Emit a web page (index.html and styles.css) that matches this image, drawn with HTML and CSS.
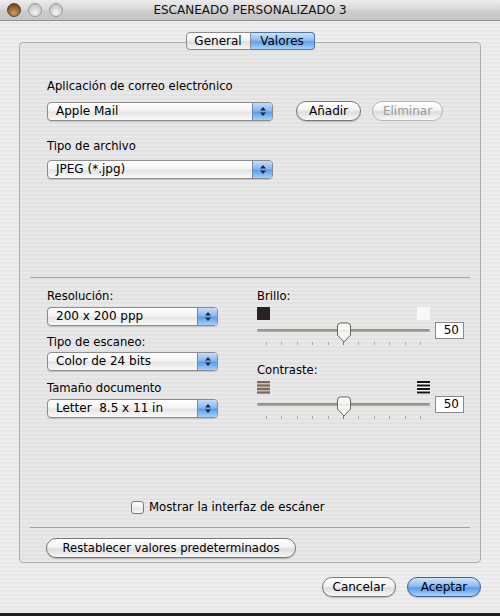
FILE: index.html
```html
<!DOCTYPE html>
<html lang="es">
<head>
  <meta charset="UTF-8">
  <title>ESCANEADO PERSONALIZADO 3</title>
  <link rel="stylesheet" href="styles.css">
</head>
<body>
  <div class="window">
    <div class="titlebar">
      <div class="lights">
        <span class="light close"></span>
        <span class="light"></span>
        <span class="light"></span>
      </div>
      <div class="title">ESCANEADO PERSONALIZADO 3</div>
    </div>

    <div class="tabs">
      <div class="tab first">General</div>
      <div class="tab last selected">Valores</div>
    </div>

    <div class="tabbox">
      <div class="field-label">Aplicación de correo electrónico</div>
      <div class="mail-row">
        <div class="popup wide">
          <span class="popup-text">Apple Mail</span>
          <span class="arrows"><svg width="8" height="11" viewBox="0 0 8 11"><path d="M4 1 L7 4.5 H1 Z M4 10 L7 6.5 H1 Z" fill="#1a2a40"/></svg></span>
        </div>
        <button class="btn add">Añadir</button>
        <button class="btn remove" disabled>Eliminar</button>
      </div>

      <div class="field-label second">Tipo de archivo</div>
      <div class="popup wide short-gap">
        <span class="popup-text">JPEG (*.jpg)</span>
        <span class="arrows"><svg width="8" height="11" viewBox="0 0 8 11"><path d="M4 1 L7 4.5 H1 Z M4 10 L7 6.5 H1 Z" fill="#1a2a40"/></svg></span>
      </div>

      <div class="separator top-sep"></div>

      <div class="lower">
        <div class="left-col">
          <div class="field-label">Resolución:</div>
          <div class="popup narrow">
            <span class="popup-text">200 x 200 ppp</span>
            <span class="arrows"><svg width="8" height="11" viewBox="0 0 8 11"><path d="M4 1 L7 4.5 H1 Z M4 10 L7 6.5 H1 Z" fill="#1a2a40"/></svg></span>
          </div>
          <div class="field-label gap-a">Tipo de escaneo:</div>
          <div class="popup narrow tight">
            <span class="popup-text">Color de 24 bits</span>
            <span class="arrows"><svg width="8" height="11" viewBox="0 0 8 11"><path d="M4 1 L7 4.5 H1 Z M4 10 L7 6.5 H1 Z" fill="#1a2a40"/></svg></span>
          </div>
          <div class="field-label gap-b">Tamaño documento</div>
          <div class="popup narrow">
            <span class="popup-text">Letter&nbsp; 8.5 x 11 in</span>
            <span class="arrows"><svg width="8" height="11" viewBox="0 0 8 11"><path d="M4 1 L7 4.5 H1 Z M4 10 L7 6.5 H1 Z" fill="#1a2a40"/></svg></span>
          </div>
        </div>

        <div class="right-col">
          <div class="field-label">Brillo:</div>
          <div class="ends">
            <span class="swatch dark"></span>
            <span class="swatch light-sw"></span>
          </div>
          <div class="slider-row">
            <div class="slider">
              <div class="track"></div>
              <svg class="thumb" width="16" height="21" viewBox="0 0 16 21"><path d="M1.5 4 Q1.5 1 4.5 1 H11.5 Q14.5 1 14.5 4 V13 L8 20 L1.5 13 Z" fill="#f7f7f7" stroke="#6b6358"/><path d="M3 9 H13" stroke="#d8d8d8"/></svg>
              <div class="ticks">
                <i></i><i></i><i></i><i></i><i></i><i class="mid"></i><i></i><i></i><i></i><i></i><i></i>
              </div>
            </div>
            <div class="value">50</div>
          </div>

          <div class="field-label contrast">Contraste:</div>
          <div class="ends icons">
            <svg width="13" height="13" viewBox="0 0 13 13"><rect y="0" width="13" height="13" fill="#c8bfb2"/><rect y="0" width="13" height="2" fill="#7a6a58"/><rect y="3.5" width="13" height="2" fill="#7a6a58"/><rect y="7" width="13" height="2" fill="#7a6a58"/><rect y="10.5" width="13" height="2" fill="#7a6a58"/></svg>
            <svg width="13" height="13" viewBox="0 0 13 13"><rect y="0" width="13" height="13" fill="#f8f8f8"/><rect y="0" width="13" height="2" fill="#1a1416"/><rect y="3.5" width="13" height="2" fill="#1a1416"/><rect y="7" width="13" height="2" fill="#1a1416"/><rect y="10.5" width="13" height="2" fill="#1a1416"/></svg>
          </div>
          <div class="slider-row">
            <div class="slider">
              <div class="track"></div>
              <svg class="thumb" width="16" height="21" viewBox="0 0 16 21"><path d="M1.5 4 Q1.5 1 4.5 1 H11.5 Q14.5 1 14.5 4 V13 L8 20 L1.5 13 Z" fill="#f7f7f7" stroke="#6b6358"/><path d="M3 9 H13" stroke="#d8d8d8"/></svg>
              <div class="ticks">
                <i></i><i></i><i></i><i></i><i></i><i class="mid"></i><i></i><i></i><i></i><i></i><i></i>
              </div>
            </div>
            <div class="value">50</div>
          </div>
        </div>
      </div>

      <label class="check-row">
        <span class="checkbox"></span>
        <span>Mostrar la interfaz de escáner</span>
      </label>

      <div class="separator bottom-sep"></div>

      <button class="btn reset">Restablecer valores predeterminados</button>
    </div>

    <div class="actions">
      <button class="btn cancel">Cancelar</button>
      <button class="btn ok">Aceptar</button>
    </div>

    <div class="desktop"></div>
  </div>
</body>
</html>
```

FILE: styles.css
```css
body {
  margin: 0;
  font-family: "DejaVu Sans", Verdana, sans-serif;
  font-size: 11.6px;
  color: #000;
}

.window {
  width: 500px;
  height: 616px;
  display: flex;
  flex-direction: column;
  background: repeating-linear-gradient(#eeeeee 0, #eeeeee 2px, #e8e8e8 2px, #e8e8e8 4px);
}

.titlebar {
  height: 20px;
  display: flex;
  align-items: center;
  position: relative;
  background: linear-gradient(#ececec, #d6d6d6 50%, #cdcdcd 51%, #c4c4c4);
  border-bottom: 1px solid #8e8e8e;
  border-radius: 5px 5px 0 0;
}

.lights {
  display: flex;
  gap: 7px;
  margin-left: 7px;
}

.light {
  width: 12px;
  height: 12px;
  border-radius: 50%;
  border: 1px solid #9a9a9a;
  background: radial-gradient(circle at 50% 70%, #f4f4f4, #c8c8c8 70%, #b0b0b0);
}

.light.close {
  border-color: #5a4634;
  background: radial-gradient(circle at 50% 75%, #d89a62, #8a5a32 60%, #4a3424);
}

.title {
  position: absolute;
  left: 0;
  right: 0;
  text-align: center;
  font-size: 12px;
  color: #111;
}

.tabs {
  display: flex;
  justify-content: center;
  margin: 11px 0 -8px;
  height: 18px;
  position: relative;
  z-index: 1;
}

.tab {
  height: 18px;
  box-sizing: border-box;
  line-height: 16px;
  text-align: center;
  border: 1px solid #8a8a8a;
  background: linear-gradient(#ffffff, #f2f2f2 45%, #dedede 55%, #f6f6f6);
  font-size: 12px;
}

.tab.first {
  width: 65px;
  border-radius: 4px 0 0 4px;
}

.tab.last {
  width: 64px;
  border-left: 0;
  border-radius: 0 4px 4px 0;
}

.tab.selected {
  border-color: #4f77ad;
  background: linear-gradient(#cfe3fb, #8cbcf3 45%, #5fa0ea 55%, #a8d2fb);
}

.tabbox {
  margin-left: 19px;
  width: 462px;
  height: 521px;
  box-sizing: border-box;
  border: 1px solid #aeaeae;
  border-radius: 4px;
  background: rgba(0, 0, 0, 0.025);
  padding: 35px 0 0 27px;
}

.field-label {
  height: 16px;
  line-height: 16px;
}

.field-label.second {
  margin-top: 17px;
}

.mail-row {
  margin-top: 7px;
  display: flex;
  align-items: center;
  height: 20px;
}

.popup {
  height: 19px;
  box-sizing: border-box;
  border: 1px solid #8c8c8c;
  border-radius: 4px;
  display: flex;
  overflow: hidden;
  background: linear-gradient(#ffffff, #f4f4f4 45%, #e4e4e4 55%, #fafafa);
  box-shadow: 0 1px 1px rgba(0, 0, 0, 0.15);
}

.popup.wide {
  width: 226px;
}

.popup.narrow {
  width: 171px;
  margin-top: 3px;
}

.popup.short-gap {
  margin-top: 6px;
}

.popup.narrow.tight {
  margin-top: 2px;
}

.popup-text {
  flex: 1;
  line-height: 17px;
  padding-left: 8px;
  font-size: 12px;
}

.arrows {
  width: 19px;
  border-left: 1px solid #6a8cb8;
  display: flex;
  align-items: center;
  justify-content: center;
  background: linear-gradient(#c4ddf8, #86b8ef 45%, #5d9de6 55%, #a6d0fa);
}

.btn {
  height: 20px;
  box-sizing: border-box;
  border: 1px solid #777;
  border-radius: 10px;
  font-family: "DejaVu Sans", Verdana, sans-serif;
  font-size: 12px;
  color: #000;
  padding: 0;
  background: linear-gradient(#ffffff, #f3f3f3 45%, #dddddd 55%, #f7f7f7);
  box-shadow: 0 1px 1px rgba(0, 0, 0, 0.2);
}

.btn.add {
  width: 65px;
  margin-left: 23px;
}

.btn.remove {
  width: 71px;
  margin-left: 11px;
  color: #9a9a9a;
  border-color: #b4b4b4;
  box-shadow: none;
}

.separator {
  height: 1px;
  background: #a2a2a2;
  margin-left: -17px;
  width: 440px;
}

.separator.top-sep {
  margin-top: 98px;
}

.lower {
  margin-top: 10px;
  height: 132px;
  display: flex;
  gap: 39px;
}

.left-col {
  width: 171px;
}

.field-label.gap-a {
  margin-top: 8px;
}

.field-label.gap-b {
  margin-top: 9px;
}

.right-col {
  width: 207px;
}

.ends {
  margin-top: 3px;
  width: 173px;
  height: 13px;
  display: flex;
  justify-content: space-between;
}

.swatch {
  width: 13px;
  height: 13px;
}

.swatch.dark {
  background: #2a2026;
}

.swatch.light-sw {
  background: #f8f8f8;
}

.slider-row {
  margin-top: 2px;
  display: flex;
  align-items: flex-start;
  gap: 5px;
}

.slider {
  position: relative;
  width: 173px;
  height: 24px;
}

.track {
  margin-top: 7px;
  height: 3px;
  border-radius: 2px;
  background: linear-gradient(#8e8476, #b8b0a4);
}

.thumb {
  position: absolute;
  left: 79px;
  top: 0;
}

.ticks {
  position: absolute;
  top: 20px;
  left: 9px;
  right: 9px;
  display: flex;
  justify-content: space-between;
}

.ticks i {
  width: 1px;
  height: 3px;
  background: #a8a8a8;
}

.ticks i.mid {
  background: #777;
}

.value {
  width: 29px;
  height: 17px;
  box-sizing: border-box;
  border: 1px solid #8a8a8a;
  background: #fff;
  text-align: right;
  padding-right: 4px;
  line-height: 15px;
  font-size: 12px;
}

.field-label.contrast {
  margin-top: 16px;
}

.ends.icons {
  margin-top: 3px;
}

.check-row {
  margin: 79px 0 0 84px;
  height: 16px;
  display: flex;
  align-items: center;
  gap: 5px;
  font-size: 11.7px;
}

.checkbox {
  width: 13px;
  height: 13px;
  box-sizing: border-box;
  border: 1px solid #777;
  border-radius: 3px;
  background: linear-gradient(#ffffff, #f0f0f0 50%, #e2e2e2 55%, #fafafa);
}

.separator.bottom-sep {
  margin-top: 12px;
}

.btn.reset {
  margin: 10px 0 0 -1px;
  width: 250px;
  display: block;
  font-size: 11.6px;
}

.actions {
  display: flex;
  justify-content: flex-end;
  gap: 11px;
  margin: 14px 19px 0 0;
}

.btn.cancel {
  width: 74px;
}

.btn.ok {
  width: 74px;
  border-color: #3f5f90;
  background: linear-gradient(#cfe3fb, #8cbcf3 45%, #5a9be8 55%, #a8d2fb);
}

.desktop {
  margin-top: auto;
  height: 3px;
  background: #1e1e1e;
}
```
